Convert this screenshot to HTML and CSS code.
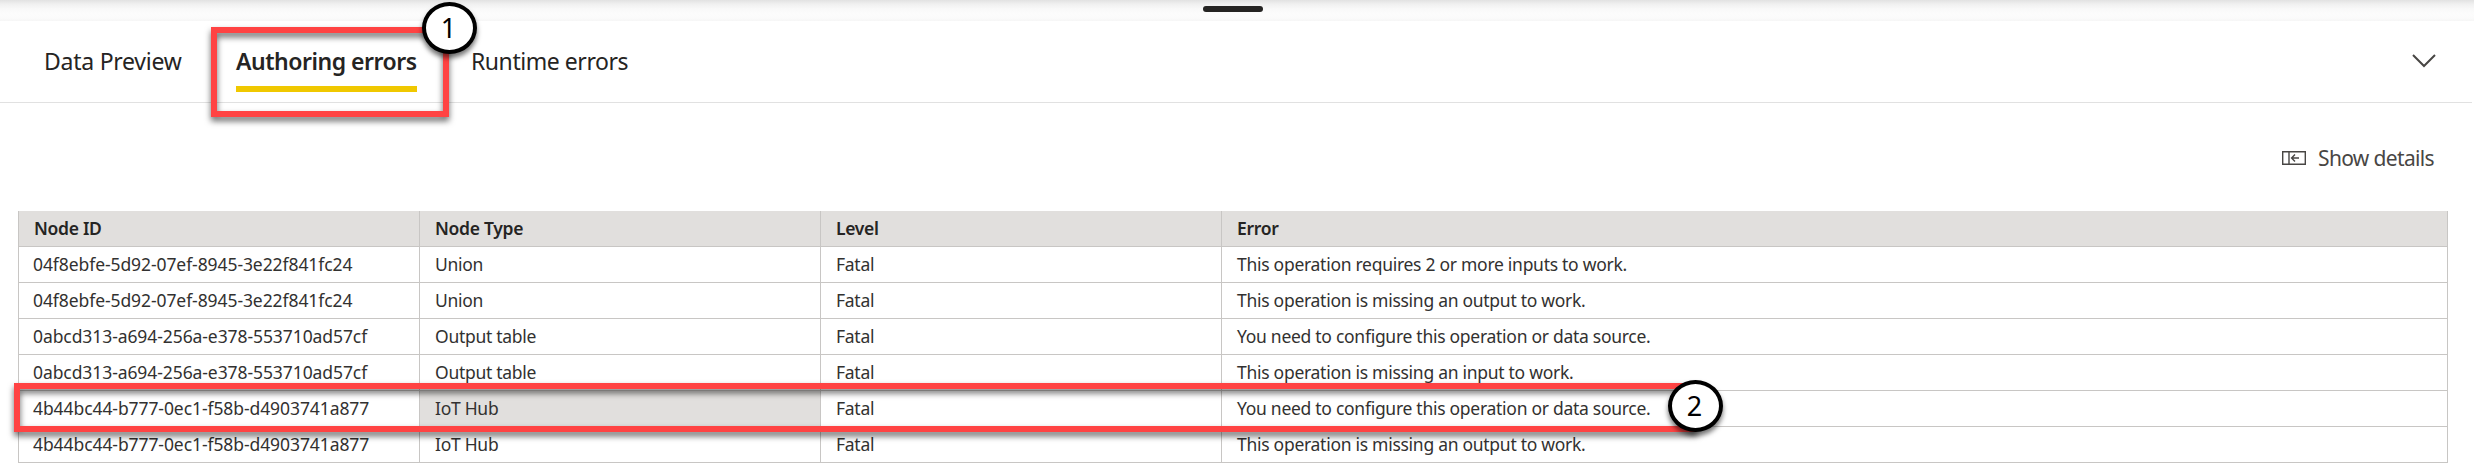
FILE: index.html
```html
<!DOCTYPE html>
<html lang="en">
<head>
<meta charset="utf-8">
<title>Authoring errors</title>
<link rel="stylesheet" href="styles.css">
</head>
<body>
<div class="resize-bar"><span class="handle"></span></div>
<nav class="tabs">
  <span class="tab preview">Data Preview</span>
  <span class="tab active">Authoring errors</span>
  <span class="tab runtime">Runtime errors</span>
  <svg class="chevron" width="26" height="16" viewBox="0 0 26 16"><path d="M2 2 L13 13 L24 2" fill="none" stroke="#484644" stroke-width="2"/></svg>
</nav>
<div class="toolbar">
  <svg width="24" height="14" viewBox="0 0 24 14" fill="none" stroke="#484644" stroke-width="1.4"><path d="M.7 .7H23.3V13.3H.7ZM7 .7V13.3M17 7H10M13 3.6L9.6 7L13 10.4"/></svg>
  <span class="details">Show details</span>
</div>
<div class="grid">
  <div class="row head"><span>Node ID</span><span>Node Type</span><span>Level</span><span>Error</span></div>
  <div class="row"><span class="id">04f8ebfe-5d92-07ef-8945-3e22f841fc24</span><span>Union</span><span>Fatal</span><span>This operation requires 2 or more inputs to work.</span></div>
  <div class="row"><span class="id">04f8ebfe-5d92-07ef-8945-3e22f841fc24</span><span>Union</span><span>Fatal</span><span>This operation is missing an output to work.</span></div>
  <div class="row"><span class="id">0abcd313-a694-256a-e378-553710ad57cf</span><span>Output table</span><span>Fatal</span><span>You need to configure this operation or data source.</span></div>
  <div class="row"><span class="id">0abcd313-a694-256a-e378-553710ad57cf</span><span>Output table</span><span>Fatal</span><span>This operation is missing an input to work.</span></div>
  <div class="row"><span class="id">4b44bc44-b777-0ec1-f58b-d4903741a877</span><span class="selected">IoT Hub</span><span>Fatal</span><span>You need to configure this operation or data source.</span></div>
  <div class="row"><span class="id">4b44bc44-b777-0ec1-f58b-d4903741a877</span><span>IoT Hub</span><span>Fatal</span><span>This operation is missing an output to work.</span></div>
</div>
<div class="callout tab-callout"></div>
<div class="callout row-callout"></div>
<div class="badge badge-one">1</div>
<div class="badge badge-two">2</div>
</body>
</html>
```
FILE: styles.css
```css
* { box-sizing: border-box; }
body {
  margin: 0;
  width: 2474px;
  height: 475px;
  overflow: hidden;
  position: relative;
  background: #fff;
  color: #252423;
  font-family: "Noto Sans", "Open Sans", sans-serif;
}
.resize-bar {
  height: 21px;
  padding-top: 6px;
  display: flex;
  justify-content: center;
  align-items: flex-start;
  padding-right: 8px;
  background: linear-gradient(#e2e2e2 0, #f0f0f0 4px, #f9f9f9 9px, #fcfcfc 14px, #fbfbfb 18px, #f6f6f6 21px);
}
.handle { width: 60px; height: 6px; border-radius: 3px; background: #252423; }
.tabs {
  display: flex;
  width: 2472px;
  height: 82px;
  padding-left: 44px;
  border-bottom: 1px solid #e1e1e1;
  font-size: 23px;
  line-height: 30px;
  white-space: nowrap;
}
.tab { margin-top: 25px; height: 46px; }
.preview { width: 192px; letter-spacing: -.25px; }
.active { width: 181px; font-weight: 600; letter-spacing: -.48px; border-bottom: 6px solid #f0c800; }
.runtime { margin-left: 54px; letter-spacing: -.45px; }
.chevron { margin: 32px 35px 0 auto; }
.toolbar {
  height: 108px;
  padding: 40px 40px 0 0;
  display: flex;
  justify-content: flex-end;
  align-items: flex-start;
  color: #484644;
}
.toolbar svg { margin-top: 8px; }
.details { width: 116px; margin-left: 12px; font-size: 21px; line-height: 30px; letter-spacing: -.65px; white-space: nowrap; }
.grid { width: 2430px; margin-left: 18px; border-left: 1px solid #c8c6c4; }
.row {
  display: grid;
  grid-template-columns: 401px 401px 401px 1226px;
  height: 36px;
  font-size: 17.5px;
  line-height: 34px;
  letter-spacing: -.28px;
}
.row span { padding-left: 15px; border-right: 1px solid #c8c6c4; border-bottom: 1px solid #c8c6c4; white-space: nowrap; }
.row .id { padding-left: 14px; letter-spacing: -.08px; }
.row .selected { background: #e1dfdd; }
.head { background: #e1dfdd; font-weight: 600; letter-spacing: -.3px; }
.row:not(.head) { color: #323130; }
.callout { position: absolute; border: 6px solid #ff4343; filter: drop-shadow(0 4px 3px rgba(0, 0, 0, .6)); }
.tab-callout { left: 211px; top: 27px; width: 238px; height: 90px; }
.row-callout { left: 14px; top: 383px; width: 1683px; height: 49px; }
.badge {
  position: absolute;
  width: 55px;
  height: 52px;
  border: 4px solid #000;
  border-radius: 50%;
  background: #fff;
  color: #000;
  box-shadow: 0 4px 5px rgba(0, 0, 0, .55);
  font-size: 27px;
  line-height: 43px;
  padding-right: 2px;
  text-align: center;
}
.badge-one { left: 422px; top: 2px; }
.badge-two { left: 1668px; top: 380px; }
```
